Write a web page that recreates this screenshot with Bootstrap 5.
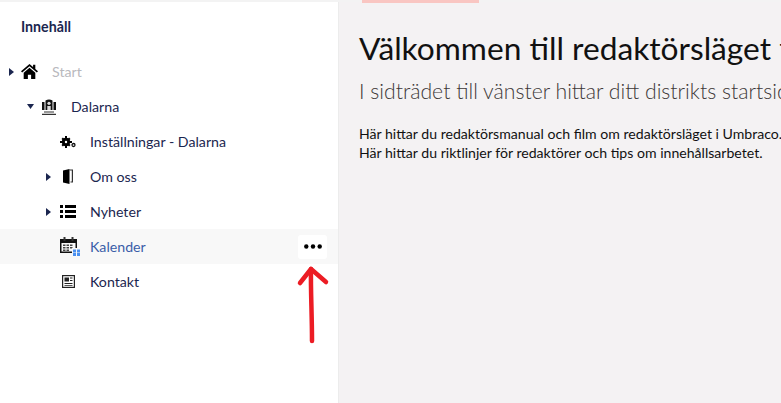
<!DOCTYPE html>
<html lang="sv">
<head>
  <meta charset="UTF-8">
  <title>Innehåll</title>
  <link href="https://cdn.jsdelivr.net/npm/bootstrap@5.3.0/dist/css/bootstrap.min.css" rel="stylesheet">
  <style>
    html, body { height: 100%; overflow: hidden; }
    body { font-family: Lato, "Liberation Sans", sans-serif; background: #fff; color: #1b264f; position: relative; }
    .top-line { height: 2px; background: #f3f3f3; position: relative; z-index: 1; }
    .pink-tab { position: absolute; top: 0; left: 362px; width: 117px; height: 3px; background: #f9c6c2; }
    .page-wrap { height: 401px; }
    .side-col { width: 339px; flex: none; background: #fff; border-right: 1px solid #ececec; }
    .side-title { font-size: 14.2px; font-weight: 700; color: #1b264f; padding: 15px 0 0 21px; height: 52px; line-height: 20px; margin: 0; }
    .tree-row { height: 35px; font-size: 14.2px; color: #1b264f; }
    .tree-row.hovered { background: #f8f8f8; color: #3b5ea8; }
    .tree-row.muted-row { color: #b9b9bd; }
    .lvl0 { padding-left: 9px; }
    .lvl1 { padding-left: 27px; }
    .lvl2 { padding-left: 46px; }
    .caret-slot { width: 7px; flex: none; margin-right: 5px; display: flex; align-items: center; }
    .icon-slot { width: 20px; height: 20px; flex: none; margin-right: 12px; display: flex; align-items: center; justify-content: center; }
    .lvl0 .icon-slot { margin-left: -1px; width: 19px; margin-right: 13px; }
    .icon-slot.cal-slot { margin-left: 2px; margin-right: 10px; }
    .dots-btn { width: 29px; height: 24px; background: #fff; border: 0; border-radius: 3px; margin-left: auto; margin-right: 11px; padding: 0; }
    .main-col { background: #f4f2f3; min-width: 0; padding: 24px 0 0 20px; white-space: nowrap; overflow: hidden; }
    .main-title { font-size: 31.7px; font-weight: 400; line-height: 44px; color: #111; margin: 0 0 6px; }
    .main-sub { font-size: 21.2px; font-weight: 300; line-height: 30px; color: #3d3837; margin: 0 0 18px; }
    .main-text { font-size: 14.1px; line-height: 19px; color: #111; margin: 0; }
    .red-arrow { position: absolute; left: 290px; top: 259px; }
  </style>
</head>
<body>
  <div class="top-line"><div class="pink-tab"></div></div>
  <div class="d-flex page-wrap">
    <div class="side-col">
      <h2 class="side-title">Innehåll</h2>

      <div class="tree-row muted-row lvl0 d-flex align-items-center">
        <span class="caret-slot"><svg width="5" height="8" viewBox="0 0 5 8"><path d="M0 0l5 4-5 4z" fill="#1b264f"/></svg></span>
        <span class="icon-slot"><svg width="17" height="17" viewBox="0 0 19 17"><path d="M9.500 0L0 8.200l1.300 1.500 8.200-7 8.200 7L19 8.200l-3-2.600V1h-2.500v2.400z" fill="#000"/><path d="M9.500 4.300L3 9.800V17h4.700v-5h3.600v5H16V9.800z" fill="#000"/></svg></span>
        <span>Start</span>
      </div>

      <div class="tree-row lvl1 d-flex align-items-center">
        <span class="caret-slot"><svg width="7" height="5" viewBox="0 0 7 5"><path d="M0 0h7L3.500 5z" fill="#1b264f"/></svg></span>
        <span class="icon-slot"><svg width="16" height="16" viewBox="0 0 16 16"><path d="M4.500 1.500Q8 -.5 11.500 1.500V11h-7zM1 3h2.500v8H1zM12.500 3H15v8h-2.500z" fill="#111"/><path d="M3 12.500h10v1H3zM1 14.800h14v1.200H1z" fill="#333"/><circle cx="8" cy="4.300" r="1.600" fill="#ddd"/><path d="M6.300 7h3.400v4H6.300z" fill="#ddd"/></svg></span>
        <span>Dalarna</span>
      </div>

      <div class="tree-row lvl2 d-flex align-items-center">
        <span class="caret-slot"></span>
        <span class="icon-slot"><svg width="16" height="12" viewBox="0 0 16 12"><path d="M5 0h2v12H5zM0 5h12v2H0zM1.500 2.900l1.400-1.400 7.600 7.600-1.400 1.400zM9.100 1.500l1.400 1.400-7.600 7.600-1.400-1.400z" fill="#000"/><circle cx="6" cy="6" r="3.100" fill="none" stroke="#000" stroke-width="2.200"/><circle cx="6" cy="6" r="1.200" fill="#fff"/><circle cx="13.500" cy="9" r="1.500" fill="none" stroke="#111" stroke-width="1.300"/></svg></span>
        <span>Inställningar - Dalarna</span>
      </div>

      <div class="tree-row lvl2 d-flex align-items-center">
        <span class="caret-slot"><svg width="5" height="8" viewBox="0 0 5 8"><path d="M0 0l5 4-5 4z" fill="#1b264f"/></svg></span>
        <span class="icon-slot"><svg width="10" height="15" viewBox="0 0 10 15"><path d="M0 1.500L6.500 0v15L0 13.500z" fill="#000"/><path d="M6.500 .5H10v13H7.500v-1h1.300V1.500H6.500z" fill="#333"/></svg></span>
        <span>Om oss</span>
      </div>

      <div class="tree-row lvl2 d-flex align-items-center">
        <span class="caret-slot"><svg width="5" height="8" viewBox="0 0 5 8"><path d="M0 0l5 4-5 4z" fill="#1b264f"/></svg></span>
        <span class="icon-slot"><svg width="16" height="13" viewBox="0 0 16 13"><path d="M0 0h3v3H0zM5 0h11v3H5zM0 5h3v3H0zM5 5h11v3H5zM0 10h3v3H0zM5 10h11v3H5z" fill="#000"/></svg></span>
        <span>Nyheter</span>
      </div>

      <div class="tree-row hovered lvl2 d-flex align-items-center">
        <span class="caret-slot"></span>
        <span class="icon-slot cal-slot"><svg width="20" height="19" viewBox="0 0 20 19"><path d="M0 2h17v14H0z" fill="#111"/><path d="M1.500 6h14v8.500h-14z" fill="#f8f8f8"/><path d="M3 7.500h2.500V9H3zM6.500 7.500H9V9H6.500zM10 7.500h2.500V9H10zM3 10h2.500v1.500H3zM6.500 10H9v1.500H6.500zM10 10h2.500v1.500H10zM3 12.500h2.500V14H3zM6.500 12.500H9V14H6.500z" fill="#444"/><path d="M3.500 0h2v4h-2zM11.500 0h2v4h-2z" fill="#333"/><path d="M12 11h8v8h-8z" fill="#f8f8f8"/><path d="M13 12.500h3V15.500h-3zM17 12.500h3V15.500h-3zM13 16h3v3h-3zM17 16h3v3h-3z" fill="#4a90f0"/></svg></span>
        <span>Kalender</span>
        <button type="button" class="dots-btn d-flex align-items-center justify-content-center">
          <svg width="18" height="5" viewBox="0 0 18 5"><circle cx="2.300" cy="2.500" r="2.200" fill="#000"/><circle cx="9" cy="2.500" r="2.200" fill="#000"/><circle cx="15.700" cy="2.500" r="2.200" fill="#000"/></svg>
        </button>
      </div>

      <div class="tree-row lvl2 d-flex align-items-center">
        <span class="caret-slot"></span>
        <span class="icon-slot"><svg width="13" height="13" viewBox="0 0 13 13"><path d="M0 0h13v13H0z" fill="#222"/><path d="M1.200 1.200h10.600v10.600H1.200z" fill="#fff"/><path d="M2.500 2.500h4.500v4H2.500zM8 2.500h2.500v1H8zM8 5h2.500v1H8zM2.500 8h8v1h-8zM2.500 10h8v.8h-8z" fill="#222"/></svg></span>
        <span>Kontakt</span>
      </div>
    </div>

    <div class="main-col flex-grow-1">
      <h1 class="main-title">Välkommen till redaktörsläget för Scouterna</h1>
      <p class="main-sub">I sidträdet till vänster hittar ditt distrikts startsida</p>
      <p class="main-text">Här hittar du redaktörsmanual och film om redaktörsläget i Umbraco.</p>
      <p class="main-text">Här hittar du riktlinjer för redaktörer och tips om innehållsarbetet.</p>
    </div>
  </div>

  <svg class="red-arrow" width="44" height="90" viewBox="0 0 44 90" fill="none" stroke="#ec1c24" stroke-width="4.500" stroke-linecap="round" stroke-linejoin="round">
    <path d="M21 10C20.500 30 22 55 22 82"/>
    <path d="M10 24L21 10 36 23"/>
  </svg>
</body>
</html>
